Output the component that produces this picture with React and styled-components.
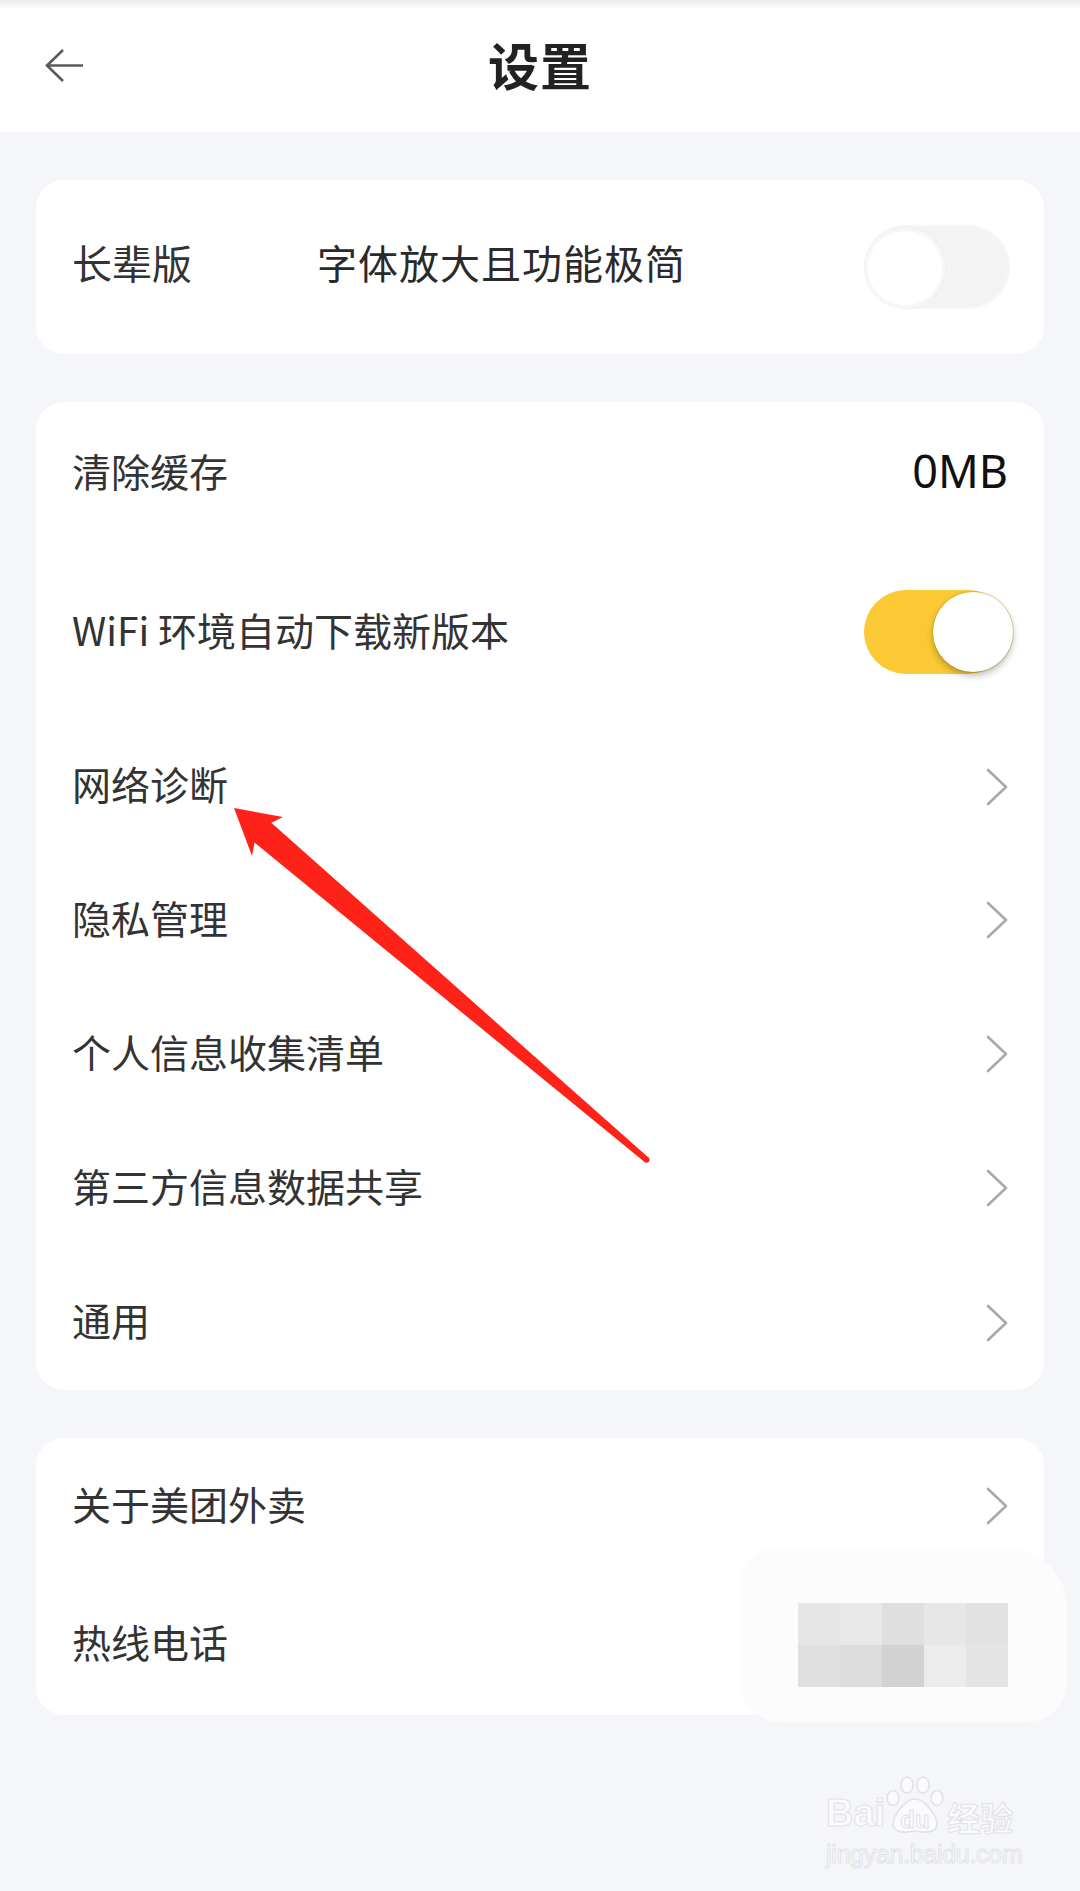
import React from "react";
import styled, { createGlobalStyle, css } from "styled-components";

const GlobalStyle = createGlobalStyle`
  html, body { margin: 0; padding: 0; background: #f5f6fa; }
  body { font-family: "Noto Sans CJK SC", "Noto Sans", sans-serif; }
  * { box-sizing: border-box; }
`;

const Page = styled.div`
  position: relative;
  width: 1080px;
  min-height: 1891px;
  background: #f5f6fa;
  overflow: hidden;
`;

const Header = styled.header`
  height: 132px;
  background: linear-gradient(#ebebeb 0px, #f6f6f6 5px, #ffffff 9px);
  display: grid;
  grid-template-columns: 132px 1fr 132px;
  align-items: center;
`;

const BackButton = styled.button`
  border: 0;
  background: none;
  padding: 0 0 0 44px;
  height: 100%;
  display: flex;
  align-items: center;
  cursor: pointer;
`;

const Title = styled.h1`
  margin: 0 0 4px;
  text-align: center;
  font-size: 51px;
  font-weight: 700;
  color: #222;
  letter-spacing: 1px;
  line-height: 1;
`;

const Content = styled.main`
  display: flex;
  flex-direction: column;
  gap: 48px;
  padding: 48px 36px 0;
`;

const Card = styled.section`
  background: #fff;
  border-radius: 28px;
  display: flex;
  flex-direction: column;
`;

const Row = styled.div`
  height: ${(p) => p.$h}px;
  display: flex;
  align-items: center;
  padding: 0 34px 0 36px;
`;

const Label = styled.span`
  font-size: ${(p) => p.$size || 39}px;
  color: #333;
  line-height: 1;
  padding-bottom: ${(p) => p.$lift || 6}px;
  ${(p) =>
    p.$fixed &&
    css`
      width: 245px;
      flex: none;
    `}
`;

const Sub = styled.span`
  font-size: 40px;
  color: #2a2a2a;
  line-height: 1;
  flex: 1;
  letter-spacing: 1px;
  padding-bottom: 10px;
`;

const Spacer = styled.div`
  flex: 1;
`;

const Value = styled.span`
  font-family: "Noto Sans", "Roboto", sans-serif;
  font-size: 45px;
  color: #111;
  line-height: 1;
  margin-right: 2px;
  padding-bottom: 6px;
`;

const Track = styled.div`
  position: relative;
  width: 146px;
  height: 84px;
  border-radius: 42px;
  flex: none;
  ${(p) =>
    p.$on
      ? css`
          background: #fbc933;
        `
      : css`
          background: #f3f3f3;
          box-shadow: inset 0 0 0 2px #f6f6f6;
        `}
`;

const Knob = styled.div`
  position: absolute;
  top: 3px;
  width: 80px;
  height: 80px;
  border-radius: 50%;
  background: #fff;
  ${(p) =>
    p.$on
      ? css`
          right: -3px;
          top: 2px;
          box-shadow: 0 4px 7px rgba(0, 0, 0, 0.25), 0 0 0 1px rgba(200, 160, 30, 0.4);
        `
      : css`
          left: 1px;
          box-shadow: 0 0 3px rgba(0, 0, 0, 0.06), inset 0 0 0 3px #f7f7f7;
        `}
`;

const Toggle = ({ on }) => (
  <Track $on={on}>
    <Knob $on={on} />
  </Track>
);

const Chevron = () => (
  <svg width="24" height="38" viewBox="0 0 24 38" style={{ marginRight: 1 }}>
    <polyline
      points="3,2 21,19 3,36"
      fill="none"
      stroke="#a9a9a9"
      strokeWidth="2.6"
      strokeLinecap="round"
      strokeLinejoin="round"
    />
  </svg>
);

const Mosaic = styled.div`
  display: grid;
  grid-template-columns: repeat(5, 42px);
  grid-template-rows: repeat(2, 42px);
  margin-right: 2px;
  position: relative;
  z-index: 1;
`;

const Cell = styled.div`
  background: ${(p) => p.$c};
`;

const Patch = styled.div`
  position: absolute;
  left: 740px;
  top: 1548px;
  width: 327px;
  height: 174px;
  border-radius: 36px 60px 40px 40px;
  background: #fcfcfd;
`;

const ArrowLayer = styled.svg`
  position: absolute;
  left: 0;
  top: 0;
  pointer-events: none;
`;

const Watermark = styled.div`
  position: absolute;
  left: 826px;
  top: 1772px;
  width: 200px;
  display: flex;
  flex-direction: column;
  align-items: flex-start;
  color: #fff;
  pointer-events: none;
`;

const WmTop = styled.div`
  display: flex;
  align-items: flex-end;
  height: 62px;
`;

const WmWord = styled.span`
  font-family: "Liberation Sans", Arial, sans-serif;
  font-weight: 700;
  font-size: ${(p) => p.$size}px;
  line-height: 1;
  color: #fbfbfd;
  -webkit-text-stroke: 1.2px #e3e4e8;
  margin-bottom: 2px;
`;

const WmCn = styled(WmWord)`
  font-family: "Noto Sans CJK SC", sans-serif;
  margin-left: 2px;
  margin-bottom: 0;
`;

const WmUrl = styled.span`
  font-family: "Liberation Sans", Arial, sans-serif;
  font-size: 25px;
  line-height: 1;
  margin-top: 8px;
  color: #fbfbfd;
  -webkit-text-stroke: 1px #e1e2e6;
  letter-spacing: -0.3px;
`;

const Paw = () => (
  <svg width="60" height="58" viewBox="0 0 60 58">
    <g fill="#fbfbfd" stroke="#e1e2e6" strokeWidth="1.6">
      <ellipse cx="22" cy="9" rx="6" ry="8" />
      <ellipse cx="38" cy="9" rx="6" ry="8" />
      <ellipse cx="8" cy="22" rx="6" ry="7.5" />
      <ellipse cx="52" cy="22" rx="6" ry="7.5" />
      <path d="M30 23 C 40 23 52 40 52 48 C 52 57 40 57 30 55 C 20 57 8 57 8 48 C 8 40 20 23 30 23 Z" />
    </g>
    <text
      x="30"
      y="52"
      textAnchor="middle"
      fontFamily="Liberation Sans, Arial, sans-serif"
      fontWeight="700"
      fontSize="24"
      fill="#fbfbfd"
      stroke="#e1e2e6"
      strokeWidth="1"
    >
      du
    </text>
  </svg>
);

const mosaic = [
  "#e6e6e6", "#e8e8e8", "#dfdfdf", "#e7e7e7", "#e2e2e2",
  "#e0e0e0", "#dcdcdc", "#d2d2d2", "#ececec", "#e4e4e4",
];

const linkRows = [
  { label: "网络诊断", h: 133 },
  { label: "隐私管理", h: 134 },
  { label: "个人信息收集清单", h: 134 },
  { label: "第三方信息数据共享", h: 134 },
  { label: "通用", h: 135 },
];

export default function App() {
  return (
    <>
      <GlobalStyle />
      <Page>
        <Header>
          <BackButton aria-label="back">
            <svg width="40" height="36" viewBox="0 0 40 36">
              <polyline
                points="19,2 3,17.5 19,33"
                fill="none"
                stroke="#5a5a5a"
                strokeWidth="2.6"
                strokeLinejoin="miter"
              />
              <line x1="3" y1="17.5" x2="39" y2="17.5" stroke="#5a5a5a" strokeWidth="2.6" />
            </svg>
          </BackButton>
          <Title>设置</Title>
          <div />
        </Header>

        <Content>
          <Card>
            <Row $h={174}>
              <Label $fixed $size={40} $lift={10}>长辈版</Label>
              <Sub>字体放大且功能极简</Sub>
              <Toggle on={false} />
            </Row>
          </Card>

          <Card>
            <Row $h={142}>
              <Label>清除缓存</Label>
              <Spacer />
              <Value>0MB</Value>
            </Row>
            <Row $h={176}>
              <Label>WiFi 环境自动下载新版本</Label>
              <Spacer />
              <Toggle on />
            </Row>
            {linkRows.map((r) => (
              <Row key={r.label} $h={r.h}>
                <Label>{r.label}</Label>
                <Spacer />
                <Chevron />
              </Row>
            ))}
          </Card>

          <Card>
            <Row $h={136}>
              <Label>关于美团外卖</Label>
              <Spacer />
              <Chevron />
            </Row>
            <Row $h={141}>
              <Label>热线电话</Label>
              <Spacer />
              <Mosaic>
                {mosaic.map((c, i) => (
                  <Cell key={i} $c={c} />
                ))}
              </Mosaic>
            </Row>
          </Card>
        </Content>

        <Patch />

        <ArrowLayer width="1080" height="1891" viewBox="0 0 1080 1891">
          <polygon
            points="234,808 283,817 271.3,822.8 648.4,1157.5 644.6,1162.1 254.5,842.6 252,856"
            fill="#fe2219"
          />
          <circle cx="646.5" cy="1159.8" r="3" fill="#fe2219" />
        </ArrowLayer>

        <Watermark>
          <WmTop>
            <WmWord $size={38}>Bai</WmWord>
            <Paw />
            <WmCn $size={33}>经验</WmCn>
          </WmTop>
          <WmUrl>jingyan.baidu.com</WmUrl>
        </Watermark>
      </Page>
    </>
  );
}
